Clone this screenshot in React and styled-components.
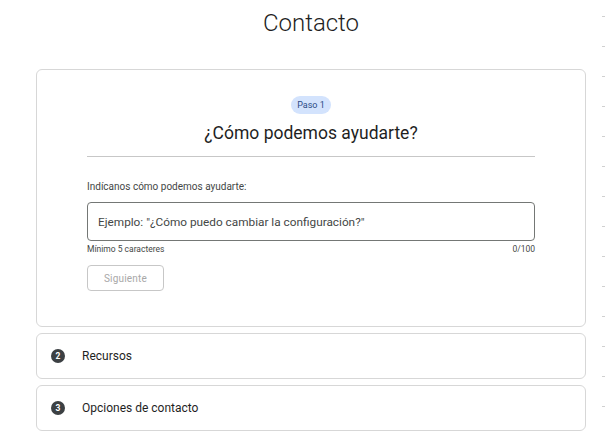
import React from "react";
import styled, { createGlobalStyle } from "styled-components";

const GlobalStyle = createGlobalStyle`
  body {
    margin: 0;
    background: #fff;
    font-family: Roboto, "Liberation Sans", sans-serif;
    color: #1f1f1f;
  }
`;

const Page = styled.div`
  position: relative;
  width: 605px;
  height: 437px;
  overflow: hidden;
`;

const Main = styled.main`
  width: 550px;
  margin-left: 36px;
  display: flex;
  flex-direction: column;
`;

const Title = styled.h1`
  margin: 9px 0 0;
  height: 28px;
  font-size: 24px;
  line-height: 28px;
  font-weight: 300;
  text-align: center;
  color: #1f1f1f;
`;

const Steps = styled.div`
  margin-top: 32px;
  display: flex;
  flex-direction: column;
  gap: 6px;
`;

const Card = styled.section`
  box-sizing: border-box;
  border: 1px solid #d7d7d7;
  border-radius: 6px;
  background: #fff;
`;

const OpenCard = styled(Card)`
  height: 258px;
  padding: 26px 50px 0;
  display: flex;
  flex-direction: column;
`;

const Badge = styled.span`
  align-self: center;
  padding: 0 6px;
  height: 18px;
  line-height: 18px;
  border-radius: 9px;
  background: #d3e3fd;
  color: #2b4a86;
  font-size: 9px;
`;

const Heading = styled.h2`
  margin: 8px 0 0;
  font-size: 17.5px;
  line-height: 22px;
  font-weight: 400;
  text-align: center;
  color: #1f1f1f;
`;

const Divider = styled.hr`
  margin: 12px 0 0;
  border: 0;
  border-top: 1px solid #c7c7c7;
`;

const Label = styled.label`
  margin-top: 23px;
  font-size: 10px;
  line-height: 13px;
  color: #444746;
`;

const Input = styled.div`
  box-sizing: border-box;
  margin-top: 9px;
  height: 39px;
  border: 1px solid #747775;
  border-radius: 4px;
  padding: 0 10px;
  display: flex;
  align-items: center;
  font-size: 11.8px;
  color: #444746;
`;

const Helper = styled.div`
  margin-top: 3px;
  display: flex;
  justify-content: space-between;
  font-size: 8.5px;
  line-height: 11px;
  color: #444746;
`;

const Button = styled.button`
  box-sizing: border-box;
  align-self: flex-start;
  margin-top: 10px;
  width: 77px;
  height: 26px;
  border: 1px solid #c7c7c7;
  border-radius: 4px;
  background: #fff;
  color: #a8a8a8;
  font-family: Roboto, "Liberation Sans", sans-serif;
  font-size: 10px;
  letter-spacing: 0.2px;
`;

const Row = styled(Card)`
  height: 46px;
  padding: 0 14px;
  display: flex;
  align-items: center;
  gap: 17px;
  font-size: 12px;
  color: #1f1f1f;
`;

const Num = styled.span`
  width: 14px;
  height: 14px;
  border-radius: 50%;
  background: #3c4043;
  color: #fff;
  font-size: 8.5px;
  font-weight: 700;
  display: flex;
  align-items: center;
  justify-content: center;
`;

const Ticks = styled.div`
  position: absolute;
  right: 0;
  top: 16px;
  width: 3px;
  height: 410px;
  background: repeating-linear-gradient(
    to bottom,
    #d0d0d0 0,
    #d0d0d0 1px,
    transparent 1px,
    transparent 30px
  );
`;

const rows = [
  { n: 2, label: "Recursos" },
  { n: 3, label: "Opciones de contacto" },
];

export default function App() {
  return (
    <Page>
      <GlobalStyle />
      <Main>
        <Title>Contacto</Title>
        <Steps>
          <OpenCard>
            <Badge>Paso 1</Badge>
            <Heading>¿Cómo podemos ayudarte?</Heading>
            <Divider />
            <Label>Indícanos cómo podemos ayudarte:</Label>
            <Input>Ejemplo: "¿Cómo puedo cambiar la configuración?"</Input>
            <Helper>
              <span>Mínimo 5 caracteres</span>
              <span>0/100</span>
            </Helper>
            <Button>Siguiente</Button>
          </OpenCard>
          {rows.map((r) => (
            <Row key={r.n}>
              <Num>{r.n}</Num>
              {r.label}
            </Row>
          ))}
        </Steps>
      </Main>
      <Ticks />
    </Page>
  );
}
